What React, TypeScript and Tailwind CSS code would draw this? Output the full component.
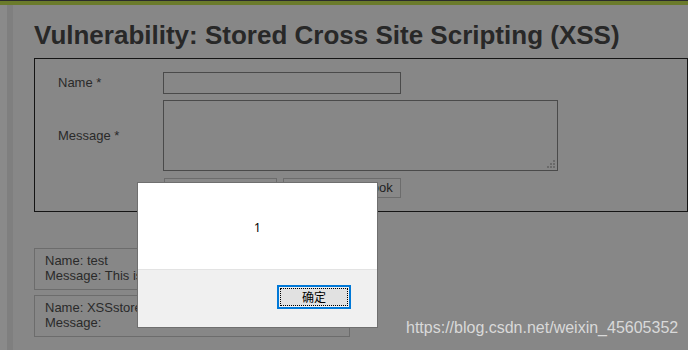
import React from "react";

const entries = [
  { name: "test", message: "This is a test comment." },
  { name: "XSSstored", message: "" },
];

export default function App() {
  return (
    <div className="relative w-[688px] h-[350px] overflow-hidden bg-[#878787] font-['Liberation_Sans',Arial,sans-serif]">
      <div className="h-[1px] bg-[#2c2c2c]" />
      <div className="h-[4px] bg-[#6b7b2b]" />
      <div className="flex h-full">
        <div className="w-[7px] bg-[#8a8a8a]" />
        <div className="w-[6px] bg-[#7f7f7f]" />
        <div className="flex-1 pl-[21px]">
          <h1 className="mt-[15px] text-[26px] leading-[30px] font-bold text-[#282828] whitespace-nowrap">
            Vulnerability: Stored Cross Site Scripting (XSS)
          </h1>

          <div className="mt-[8px] w-[654px] h-[154px] border border-[#141414] pl-[23px] pt-[13px]">
            <div className="flex items-center h-[21px]">
              <span className="w-[105px] text-[13px] text-[#2a2a2a]">Name *</span>
              <div className="w-[238px] h-[22px] border border-[#4a4a4a]" />
            </div>
            <div className="flex mt-[7px]">
              <span className="w-[105px] pt-[26px] text-[13px] text-[#2a2a2a]">Message *</span>
              <div className="relative w-[395px] h-[71px] border border-[#4a4a4a]">
                <svg className="absolute right-[2px] bottom-[2px]" width="8" height="8" viewBox="0 0 8 8">
                  <rect x="6" y="0" width="2" height="2" fill="#6a6a6a" />
                  <rect x="3" y="3" width="2" height="2" fill="#6a6a6a" />
                  <rect x="6" y="3" width="2" height="2" fill="#6a6a6a" />
                  <rect x="0" y="6" width="2" height="2" fill="#6a6a6a" />
                  <rect x="3" y="6" width="2" height="2" fill="#6a6a6a" />
                  <rect x="6" y="6" width="2" height="2" fill="#6a6a6a" />
                </svg>
              </div>
            </div>
            <div className="flex gap-[6px] mt-[7px] ml-[106px]">
              <div className="w-[113px] h-[20px] border border-[#6c6c6c] bg-[#888888] text-[13px] text-[#222] flex items-center justify-center">
                Sign Guestbook
              </div>
              <div className="w-[118px] h-[20px] border border-[#6c6c6c] bg-[#888888] text-[13px] text-[#222] flex items-center justify-center pl-[4px]">
                Clear Guestbook
              </div>
            </div>
          </div>

          <div className="mt-[36px] flex flex-col gap-[5px]">
            {entries.map((e) => (
              <div
                key={e.name}
                className="w-[316px] h-[42px] border border-[#6c6c6c] pl-[10px] pt-[4px] text-[13px] leading-[15px] text-[#2a2a2a]"
              >
                <div>Name: {e.name}</div>
                <div>Message: {e.message}</div>
              </div>
            ))}
          </div>
        </div>
      </div>

      {/* alert dialog */}
      <div className="absolute left-[137px] top-[182px] w-[241px] h-[146px] bg-white border border-[#6f6f6f] flex flex-col">
        <div className="h-[86px] flex items-center justify-center pt-[4px] text-[12px] text-black font-['Noto_Sans','Liberation_Sans',sans-serif]">
          1
        </div>
        <div className="flex-1 bg-[#f0f0f0] border-t border-[#e3e3e3] flex justify-end pr-[26px] pt-[15px]">
          <div className="w-[74px] h-[24px] border-2 border-[#0078d7] p-[1px]">
            <div className="w-full h-full border border-dotted border-black bg-[#e1e1e1] flex items-center justify-center text-[12px] text-black font-['Noto_Sans_CJK_SC',sans-serif]">
              确定
            </div>
          </div>
        </div>
      </div>

      <div className="absolute left-[406px] top-[316px] text-[16px] text-[#d9d9d9] whitespace-nowrap font-['Liberation_Sans',Arial,sans-serif]">
        https://blog.csdn.net/weixin_45605352
      </div>
    </div>
  );
}
